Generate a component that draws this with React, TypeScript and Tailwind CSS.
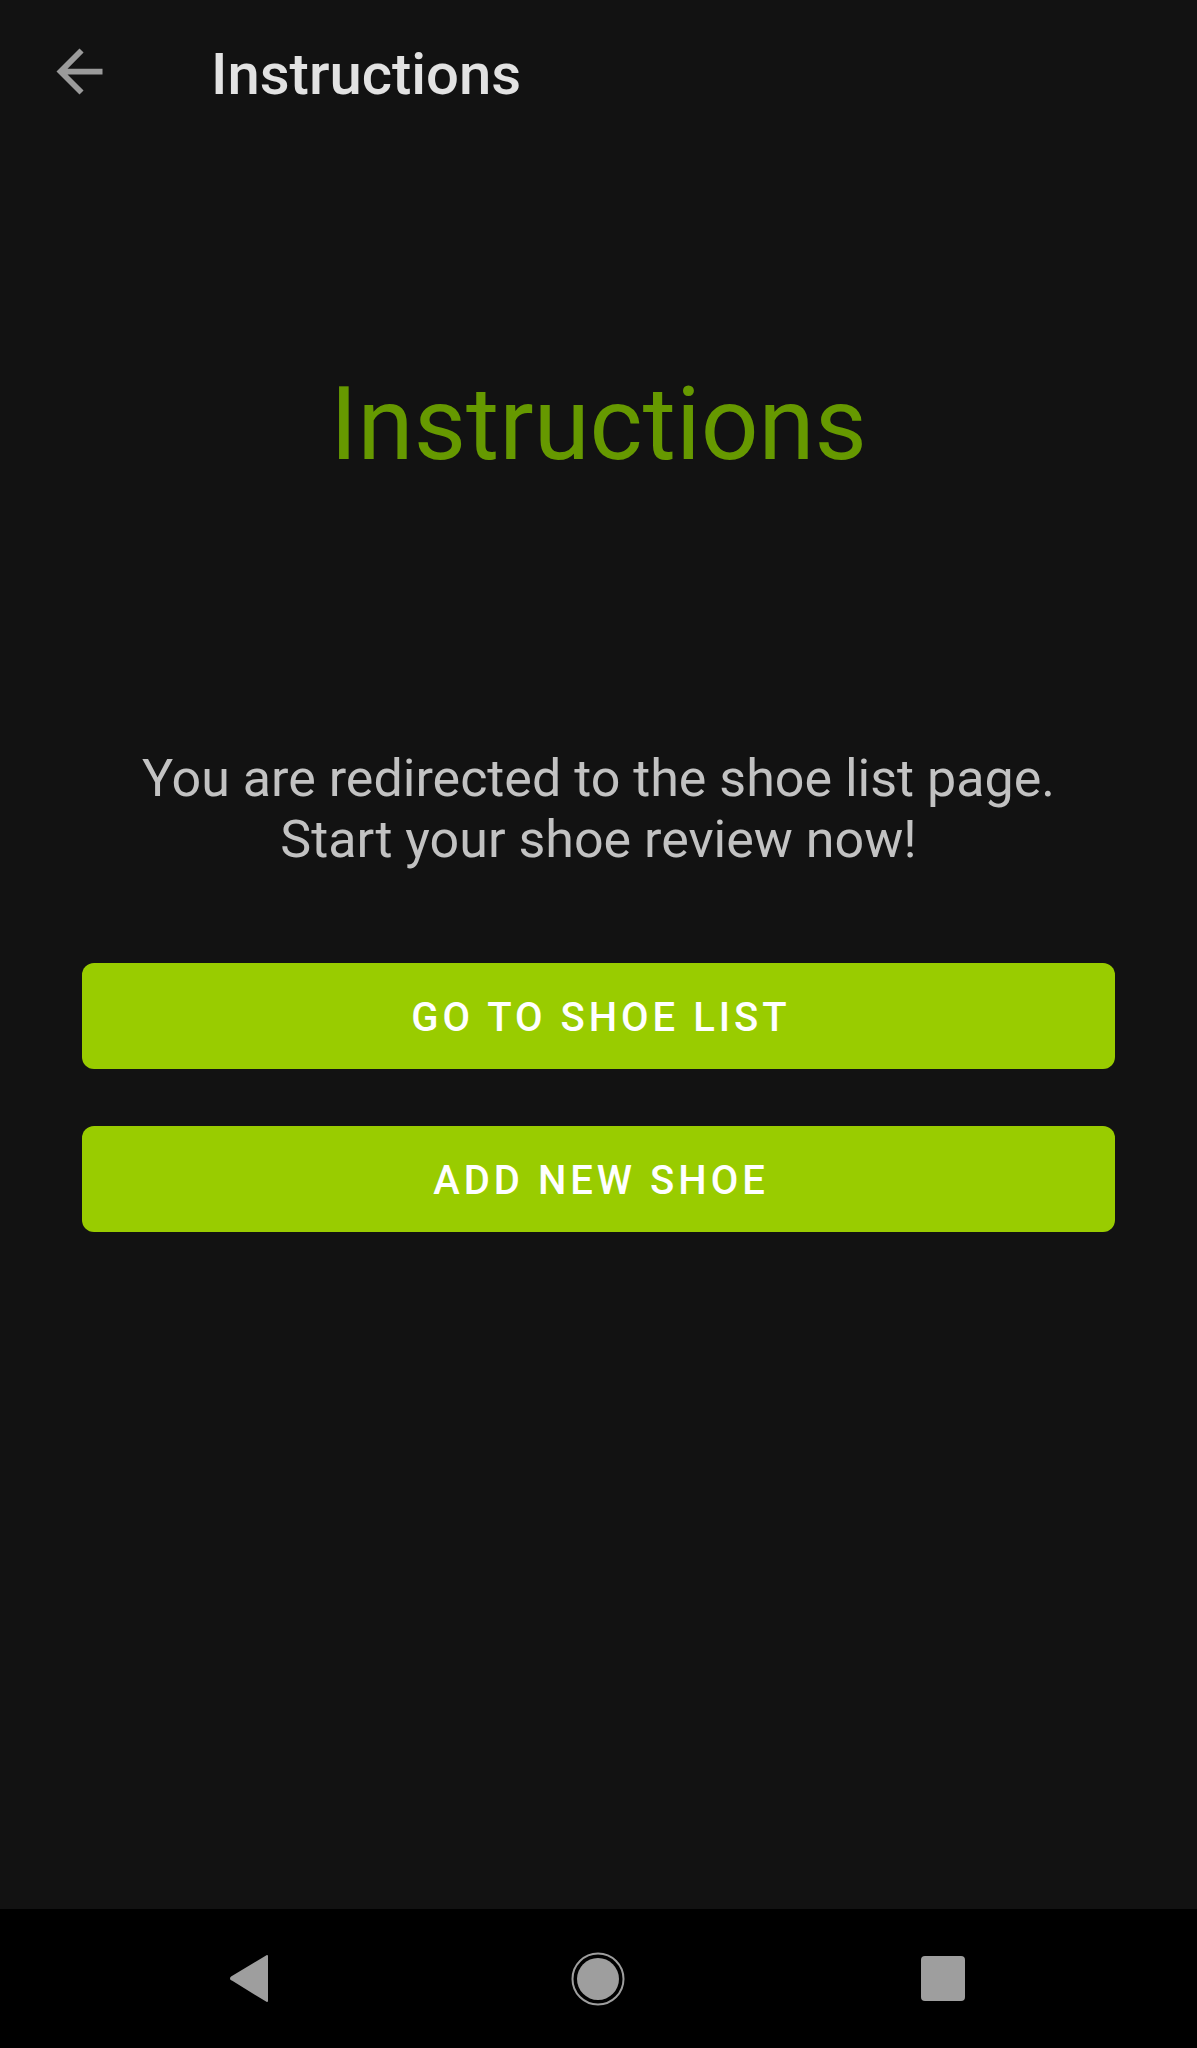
import { Fragment } from "react";

const BackArrow = () => (
    <svg viewBox="0 0 24 24" className="w-[69px] h-[69px]" fill="#9b9b9b">
        <path d="M20 11H7.83l5.59-5.59L12 4l-8 8 8 8 1.41-1.41L7.83 13H20v-2z" />
    </svg>
);

const NavBar = () => (
    <div className="h-[139px] bg-black flex items-center justify-between pl-[229px] pr-[232px]">
        <svg viewBox="0 0 40 47" className="w-[40px] h-[47px]">
            <path d="M38 1 L38 46 L3 24.5 Q1 23.5 3 22 Z" fill="#9e9e9e" stroke="#9e9e9e" strokeWidth="2" strokeLinejoin="round" />
        </svg>
        <svg viewBox="0 0 54 54" className="w-[54px] h-[54px] ml-[6px]">
            <circle cx="27" cy="27" r="25.5" fill="none" stroke="#9e9e9e" strokeWidth="2" />
            <circle cx="27" cy="27" r="21" fill="#9e9e9e" />
        </svg>
        <div className="w-[44px] h-[45px] rounded-[4px] bg-[#9e9e9e]" />
    </div>
);

const buttons = ["GO TO SHOE LIST", "ADD NEW SHOE"];

export default function App() {
    return (
        <div className="h-[2048px] bg-[#121212] flex flex-col" style={{ fontFamily: "Roboto, 'Noto Sans', sans-serif" }}>
            {/* Toolbar */}
            <div className="h-[144px] flex items-start">
                <div className="ml-[45px] mt-[37px]">
                    <BackArrow />
                </div>
                <h1 className="ml-[97px] mt-[45px] text-[58px] leading-none font-medium text-[#e2e2e2]">Instructions</h1>
            </div>

            <div className="flex-1 flex flex-col items-center">
                <h2 className="mt-[230px] text-[101.5px] leading-none text-[#669900]">Instructions</h2>

                <p className="mt-[272px] text-center text-[52px] leading-[61px] text-[#c2c2c2]">
                    {["You are redirected to the shoe list page.", "Start your shoe review now!"].map((line, i) => (
                        <Fragment key={i}>
                            {line}
                            {i === 0 && <br />}
                        </Fragment>
                    ))}
                </p>

                <div className="mt-[93px] w-full px-[82px] flex flex-col gap-[57px]">
                    {buttons.map((label) => (
                        <button
                            key={label}
                            className="h-[106px] w-full rounded-[12px] bg-[#99cc00] text-white text-[40px] font-medium tracking-[0.1em] flex items-center justify-center pt-[5px] pl-[5px]"
                        >
                            {label}
                        </button>
                    ))}
                </div>
            </div>

            <NavBar />
        </div>
    );
}
